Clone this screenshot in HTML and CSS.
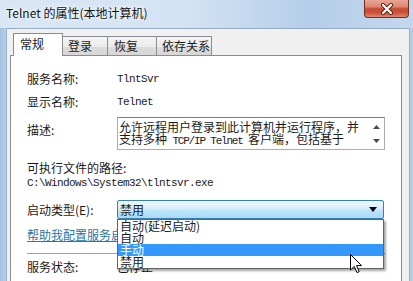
FILE: index.html
```html
<!DOCTYPE html>
<html lang="zh-CN">
<head>
<meta charset="utf-8">
<link rel="stylesheet" href="styles.css">
</head>
<body>
<div class="window">
  <div class="titlebar">
    <span class="title">Telnet 的属性(本地计算机)</span>
    <div class="close">
      <svg width="14" height="12" viewBox="0 0 14 12">
        <path d="M3 2 L11 10 M11 2 L3 10" stroke="#5a1e14" stroke-width="4" stroke-linecap="round"/>
        <path d="M3 2 L11 10 M11 2 L3 10" stroke="#ffffff" stroke-width="2.2" stroke-linecap="round"/>
      </svg>
    </div>
  </div>
  <div class="body">
    <div class="tabs">
      <div class="tab active w-general">常规</div>
      <div class="tab w-logon">登录</div>
      <div class="tab w-recover">恢复</div>
      <div class="tab w-deps">依存关系</div>
    </div>
    <div class="panel">
      <div class="row r-name"><span class="label">服务名称:</span><span class="mono">TlntSvr</span></div>
      <div class="row r-display"><span class="label">显示名称:</span><span class="mono">Telnet</span></div>
      <div class="row r-desc">
        <span class="label desc-label">描述:</span>
        <div class="descbox">
          <div class="desctext">允许远程用户登录到此计算机并运行程序，并<br>支持多种<span class="mono"> TCP/IP Telnet </span>客户端，包括基于</div>
          <div class="scroll">
            <svg width="7" height="4" viewBox="0 0 7 4"><path d="M0 4 L3.5 0 L7 4 Z" fill="#4a4a4a"/></svg>
            <svg width="7" height="4" viewBox="0 0 7 4"><path d="M0 0 L3.5 4 L7 0 Z" fill="#4a4a4a"/></svg>
          </div>
        </div>
      </div>
      <div class="line r-pathlabel">可执行文件的路径:</div>
      <div class="line mono r-path">C:\Windows\System32\tlntsvr.exe</div>
      <div class="row r-start">
        <span class="label start-label">启动类型(E):</span>
        <div class="combo-wrap">
          <div class="combo">
            <span>禁用</span>
            <svg width="8" height="5" viewBox="0 0 8 5"><path d="M0 0 L8 0 L4 5 Z" fill="#000"/></svg>
          </div>
          <div class="list">
            <div class="item">自动(延迟启动)</div>
            <div class="item">自动</div>
            <div class="item selected">手动</div>
            <div class="item">禁用</div>
          </div>
        </div>
      </div>
      <div class="line r-link"><span class="link">帮助我配置服务启动选项。</span></div>
      <div class="sep"></div>
      <div class="row r-status"><span class="label">服务状态:</span><span>已停止</span></div>
      <svg class="cursor" width="13" height="20" viewBox="0 0 13 20">
        <path d="M0.5 0.5 L0.5 16 L4.2 12.4 L7 18.6 L9.2 17.6 L6.5 11.6 L11.5 11.6 Z" fill="#ffffff" stroke="#000000" stroke-width="1" stroke-linejoin="round"/>
      </svg>
    </div>
  </div>
</div>
</body>
</html>
```

FILE: styles.css
```css
html, body {
  margin: 0;
  padding: 0;
}
body {
  width: 413px;
  height: 281px;
  overflow: hidden;
  font-family: "Noto Sans CJK SC", "Noto Sans", sans-serif;
  font-size: 12px;
  color: #1a1a1a;
}
.window {
  width: 413px;
  height: 281px;
  display: flex;
  flex-direction: column;
  overflow: hidden;
  background: linear-gradient(90deg, #a4c1e1 0, #b6cfea 6px, #c9dcf0 40%, #b4cde8 100%);
}
.titlebar {
  height: 28px;
  flex: none;
  display: flex;
  justify-content: space-between;
  align-items: flex-start;
  padding-left: 6px;
  background: linear-gradient(90deg, #d9e7f5 0%, #d3e3f3 45%, #b5cee9 75%, #c3d7ee 100%);
}
.title {
  margin-top: 5px;
  line-height: 16px;
  font-size: 12px;
  color: #111;
  text-shadow: 0 0 6px #ffffff, 0 0 3px #ffffff;
}
.close {
  width: 45px;
  height: 18px;
  margin-right: 4px;
  box-sizing: border-box;
  border: 1px solid #6e3024;
  border-top: none;
  border-radius: 0 0 4px 4px;
  background: linear-gradient(#e8a797 0%, #dc8470 40%, #c84a33 52%, #c9533a 75%, #e08a6c 100%);
  display: flex;
  align-items: center;
  justify-content: center;
}
.body {
  flex: 1;
  margin: 0 3px 0 6px;
  background: #f0f0f0;
  border: 1px solid #98adc6;
  border-bottom: none;
  padding: 4px 7px 0 3px;
  display: flex;
  flex-direction: column;
}
.tabs {
  height: 23px;
  margin-left: 3px;
  margin-bottom: -1px;
  display: flex;
  align-items: flex-end;
}
.tab {
  box-sizing: border-box;
  height: 20px;
  margin-left: -1px;
  padding-left: 5px;
  border: 1px solid #898c95;
  border-bottom: none;
  background: linear-gradient(#f4f4f4 0%, #ebebeb 50%, #dcdcdc 51%, #d6d6d6 100%);
  line-height: 17px;
  white-space: nowrap;
}
.tab.active {
  height: 23px;
  margin-left: 0;
  padding-left: 6px;
  background: #ffffff;
  line-height: 20px;
  position: relative;
  z-index: 1;
}
.w-general { width: 50px; }
.w-logon { width: 46px; }
.w-recover { width: 50px; padding-left: 6px; }
.w-deps { width: 56px; padding-left: 5px; }
.panel {
  flex: 1;
  position: relative;
  background: #ffffff;
  border: 1px solid #898c95;
  border-bottom: none;
  padding: 16px 0 0 16px;
}
.row {
  display: flex;
  align-items: flex-start;
  line-height: 14px;
}
.line {
  line-height: 14px;
  white-space: nowrap;
}
.label {
  width: 90px;
  flex: none;
}
.mono {
  font-family: "Liberation Mono", "DejaVu Sans Mono", monospace;
  font-size: 11px;
  letter-spacing: -0.6px;
}
.r-display { margin-top: 9px; }
.r-desc { margin-top: 8px; }
.desc-label { padding-top: 6px; }
.descbox {
  box-sizing: border-box;
  width: 268px;
  height: 33px;
  border: 1px solid #abadb3;
  border-top-color: #7d7f84;
  display: flex;
}
.desctext {
  flex: 1;
  padding: 3px 0 0 1px;
  line-height: 12px;
  white-space: nowrap;
  overflow: hidden;
}
.desctext .mono {
  letter-spacing: -1.2px;
}
.scroll {
  width: 16px;
  flex: none;
  display: flex;
  flex-direction: column;
  align-items: center;
  justify-content: space-between;
  padding: 7px 0 6px;
  box-sizing: border-box;
}
.r-pathlabel { margin-top: 11px; }
.r-path { margin-top: 1px; }
.r-start {
  margin-top: 10px;
  align-items: center;
}
.combo-wrap {
  position: relative;
}
.combo {
  box-sizing: border-box;
  width: 267px;
  height: 19px;
  border: 1px solid #3c7fb1;
  border-radius: 2px;
  background: linear-gradient(#eaf6fd 0%, #d9f0fc 45%, #bee6fd 52%, #a7d9f5 100%);
  padding: 0 6px 0 2px;
  line-height: 17px;
  display: flex;
  justify-content: space-between;
  align-items: center;
}
.list {
  position: absolute;
  top: 19px;
  left: 0;
  width: 267px;
  box-sizing: border-box;
  border: 1px solid #646464;
  background: #ffffff;
  box-shadow: 2px 2px 2px rgba(0, 0, 0, 0.35);
  z-index: 2;
}
.item {
  height: 12px;
  line-height: 12px;
  padding-left: 2px;
  white-space: nowrap;
}
.item.selected {
  background: #3399ff;
  color: #ffffff;
}
.r-link { margin-top: 9px; }
.link {
  color: #2a76a3;
  text-decoration: underline;
}
.sep {
  margin-top: 11px;
  width: 358px;
  height: 1px;
  background: #a0a0a0;
}
.r-status { margin-top: 6px; }
.cursor {
  position: absolute;
  left: 339px;
  top: 198px;
  z-index: 3;
}
```
